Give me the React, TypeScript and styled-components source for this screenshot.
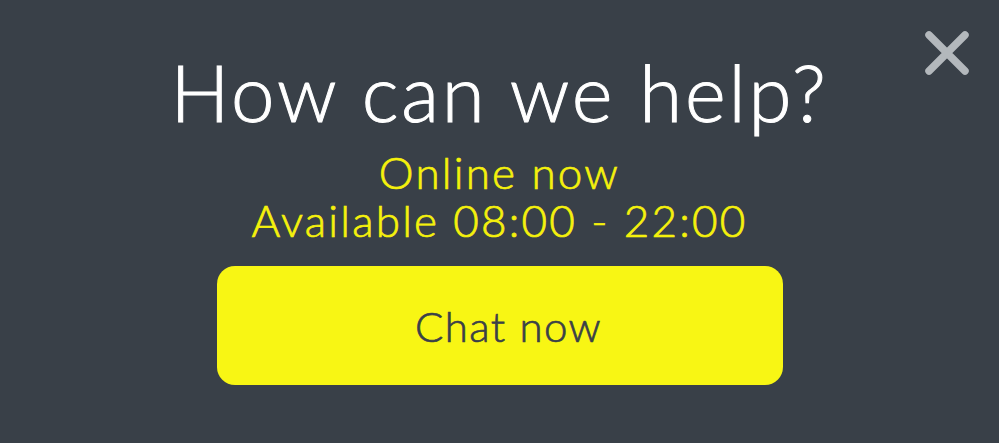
import styled, { createGlobalStyle } from 'styled-components'

const GlobalStyle = createGlobalStyle`
  html, body {
    margin: 0;
    padding: 0;
    background: #394048;
  }
`

const Panel = styled.div`
  position: relative;
  width: 999px;
  height: 443px;
  background: #394048;
  display: flex;
  flex-direction: column;
  align-items: center;
  padding-top: 52px;
  box-sizing: border-box;
  font-family: Lato, "Open Sans", sans-serif;
`

const Title = styled.h1`
  margin: 0;
  color: #ffffff;
  font-size: 78px;
  font-weight: 300;
  line-height: 80px;
  letter-spacing: 2.8px;
  -webkit-text-stroke: 1px #ffffff;
`

const Status = styled.p`
  margin: 16px 0 0;
  color: #f5f10c;
  font-size: 44px;
  font-weight: 300;
  line-height: 48px;
  letter-spacing: 2.2px;
  text-align: center;
  -webkit-text-stroke: 0.7px #f5f10c;
`

const ChatButton = styled.button`
  margin-top: 22px;
  width: 566px;
  height: 119px;
  padding: 0 0 0 18px;
  border: none;
  border-radius: 18px;
  background: #f8f614;
  color: #3a4048;
  font-family: inherit;
  font-size: 42px;
  font-weight: 300;
  letter-spacing: 1.4px;
  -webkit-text-stroke: 0.7px #3a4048;
  cursor: pointer;
`

const CloseButton = styled.button`
  position: absolute;
  top: 28px;
  right: 27px;
  width: 50px;
  height: 50px;
  padding: 0;
  border: none;
  background: none;
  cursor: pointer;
`

export default function App() {
  return (
    <>
      <GlobalStyle />
      <Panel>
        <CloseButton aria-label="Close">
          <svg width="50" height="50" viewBox="0 0 50 50">
            <path d="M7 7 L43 43 M43 7 L7 43" stroke="#b3b8bc" strokeWidth="7.5" strokeLinecap="round" />
          </svg>
        </CloseButton>
        <Title>How can we help?</Title>
        <Status>
          Online now
          <br />
          Available 08:00 - 22:00
        </Status>
        <ChatButton>Chat now</ChatButton>
      </Panel>
    </>
  )
}
